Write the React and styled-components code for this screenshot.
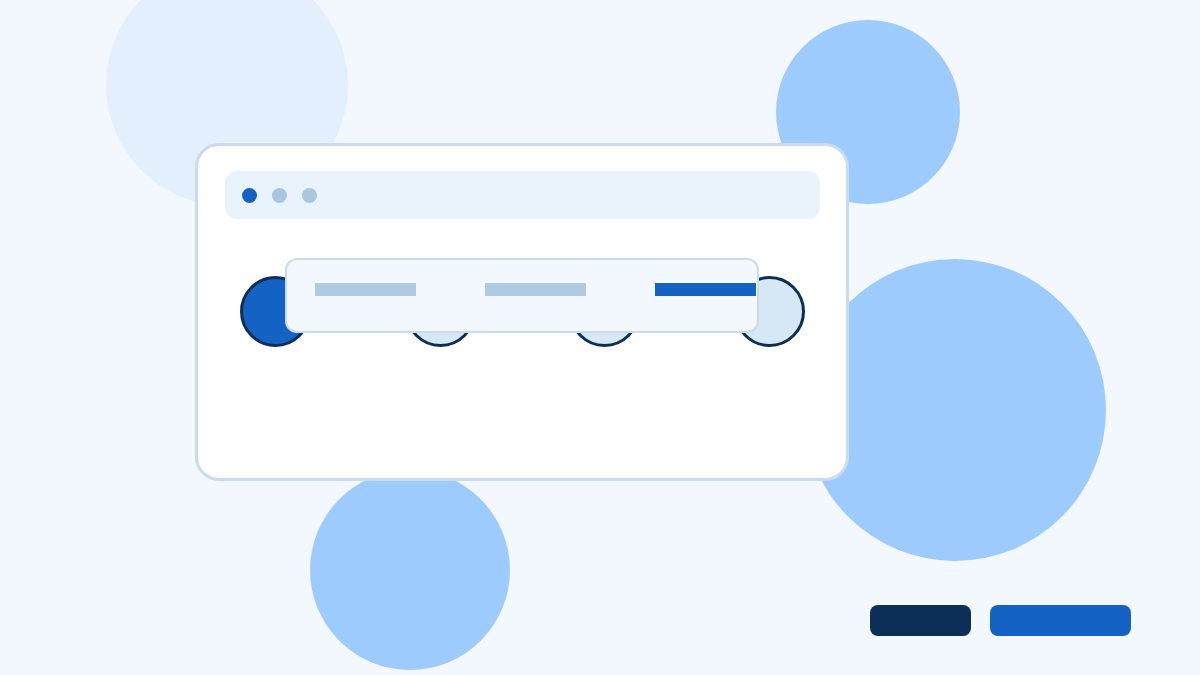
import React from 'react'
import styled, { createGlobalStyle } from 'styled-components'

const GlobalStyle = createGlobalStyle`
  html, body {
    margin: 0;
    padding: 0;
    background: #f3f8fe;
    font-family: "Inter", "Liberation Sans", sans-serif;
  }
  * {
    box-sizing: border-box;
  }
`

const blobs = [
  { x: 227, y: 85, r: 121, color: '#e3effc' },
  { x: 868, y: 112, r: 92, color: '#9ecbfd' },
  { x: 955, y: 410, r: 151, color: '#9ecbfd' },
  { x: 410, y: 570, r: 100, color: '#9ecbfd' },
]

const steps = [true, false, false, false]
const tabs = [false, false, true]

function App() {
  return (
    <>
      <GlobalStyle />
      <Stage>
        {blobs.map((b, i) => (
          <Blob
            key={i}
            $color={b.color}
            style={{ left: b.x - b.r, top: b.y - b.r, width: b.r * 2, height: b.r * 2 }}
          />
        ))}
        <Window>
          <TitleBar>
            <Dot $active />
            <Dot />
            <Dot />
          </TitleBar>
          <Steps>
            {steps.map((active, i) => (
              <Step key={i} $active={active} />
            ))}
            <TabPanel>
              {tabs.map((active, i) => (
                <Tab key={i} $active={active} />
              ))}
            </TabPanel>
          </Steps>
        </Window>
        <Actions>
          <ActionButton $dark $width={101} />
          <ActionButton $width={141} />
        </Actions>
      </Stage>
    </>
  )
}

export default App

const Stage = styled.div`
  position: relative;
  width: 1200px;
  height: 675px;
  overflow: hidden;
  padding: 143px 0 0 195px;
  display: flex;
  flex-direction: column;
`

const Blob = styled.div`
  position: absolute;
  border-radius: 50%;
  background: ${(p) => p.$color};
  z-index: 0;
`

const Window = styled.div`
  position: relative;
  z-index: 1;
  width: 654px;
  height: 338px;
  background: #ffffff;
  border: 3px solid #c8dcee;
  border-radius: 24px;
  padding: 25px 26px 0 27px;
`

const TitleBar = styled.div`
  height: 48px;
  background: #e9f3fc;
  border-radius: 12px;
  display: flex;
  align-items: center;
  gap: 15px;
  padding-left: 17px;
`

const Dot = styled.span`
  width: 15px;
  height: 15px;
  border-radius: 50%;
  background: ${(p) => (p.$active ? '#1463c4' : '#a9c6e0')};
`

const Steps = styled.div`
  position: relative;
  margin-top: 57px;
  padding: 0 15px;
  display: flex;
  justify-content: space-between;
`

const Step = styled.div`
  width: 71px;
  height: 71px;
  border-radius: 50%;
  border: 3px solid #0d2f57;
  background: ${(p) => (p.$active ? '#1463c4' : '#d6e8f5')};
`

const TabPanel = styled.div`
  position: absolute;
  left: 60px;
  top: -18px;
  width: 474px;
  height: 75px;
  background: #f2f8fd;
  border: 2px solid #c8dcee;
  border-radius: 12px;
  padding: 23px 0 0 28px;
  display: flex;
  gap: 69px;
`

const Tab = styled.div`
  width: 101px;
  height: 13px;
  background: ${(p) => (p.$active ? '#1463c4' : '#aecbe3')};
`

const Actions = styled.div`
  position: relative;
  z-index: 1;
  margin-top: 124px;
  padding-right: 69px;
  display: flex;
  justify-content: flex-end;
  gap: 19px;
`

const ActionButton = styled.div`
  width: ${(p) => p.$width}px;
  height: 31px;
  border-radius: 8px;
  background: ${(p) => (p.$dark ? '#0d2f57' : '#1463c4')};
`
